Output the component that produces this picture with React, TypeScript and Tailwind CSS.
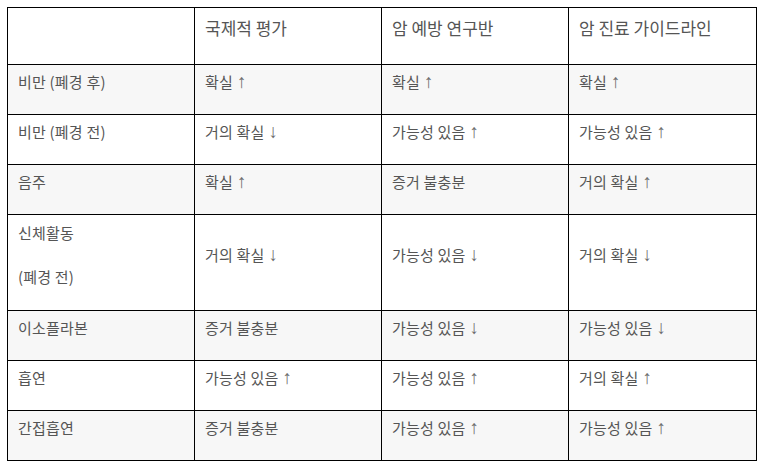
import React from "react";

type Row = { label: string[]; cells: string[]; striped: boolean; h: string };

const rows: Row[] = [
  { label: ["비만 (폐경 후)"], cells: ["확실↑", "확실↑", "확실↑"], striped: true, h: "h-[50px]" },
  { label: ["비만 (폐경 전)"], cells: ["거의 확실↓", "가능성 있음↑", "가능성 있음↑"], striped: false, h: "h-[50px]" },
  { label: ["음주"], cells: ["확실↑", "증거 불충분", "거의 확실↑"], striped: true, h: "h-[50px]" },
  { label: ["신체활동", "(폐경 전)"], cells: ["거의 확실↓", "가능성 있음↓", "거의 확실↓"], striped: false, h: "h-[96px]" },
  { label: ["이소플라본"], cells: ["증거 불충분", "가능성 있음↓", "가능성 있음↓"], striped: true, h: "h-[50px]" },
  { label: ["흡연"], cells: ["가능성 있음↑", "가능성 있음↑", "거의 확실↑"], striped: false, h: "h-[50px]" },
  { label: ["간접흡연"], cells: ["증거 불충분", "가능성 있음↑", "가능성 있음↑"], striped: true, h: "h-[50px]" },
];

const headers = ["", "국제적 평가", "암 예방 연구반", "암 진료 가이드라인"];

function Text({ s }: { s: string }) {
  const last = s.slice(-1);
  if (last === "↑" || last === "↓") {
    return (
      <>
        {s.slice(0, -1)}
        <span
          className="ml-[4px] text-[#6f6f6f] text-[19px] leading-none"
          style={{ fontFamily: '"Liberation Sans", sans-serif' }}
        >
          {last}
        </span>
      </>
    );
  }
  return <>{s}</>;
}

function Cell({ lines, header }: { lines: string[]; header?: boolean }) {
  return (
    <td className="border border-black px-[10px] py-0 align-middle">
      {lines.map((l, i) => (
        <p
          key={i}
          className={`mb-[16px] leading-[28px] whitespace-nowrap ${header ? "text-[17px]" : "text-[15px] tracking-[0.2px]"}`}
        >
          {l ? <Text s={l} /> : "\u00a0"}
        </p>
      ))}
    </td>
  );
}

export default function App() {
  return (
    <div
      className="w-[765px] h-[474px] bg-white pt-[7px] pl-[7px] text-[#555555]"
      style={{ fontFamily: '"Noto Sans CJK KR", "Noto Sans", sans-serif' }}
    >
      <table className="table-fixed border-collapse w-[750px]">
        <colgroup>
          <col className="w-[187px]" />
          <col className="w-[187px]" />
          <col className="w-[187px]" />
          <col className="w-[188px]" />
        </colgroup>
        <tbody>
          <tr className="h-[57px]">
            {headers.map((h, i) => (
              <Cell key={i} lines={[h]} header />
            ))}
          </tr>
          {rows.map((r, i) => (
            <tr key={i} className={`${r.h} ${r.striped ? "bg-[#f7f7f7]" : "bg-white"}`}>
              <Cell lines={r.label} />
              {r.cells.map((c, j) => (
                <Cell key={j} lines={[c]} />
              ))}
            </tr>
          ))}
        </tbody>
      </table>
    </div>
  );
}
